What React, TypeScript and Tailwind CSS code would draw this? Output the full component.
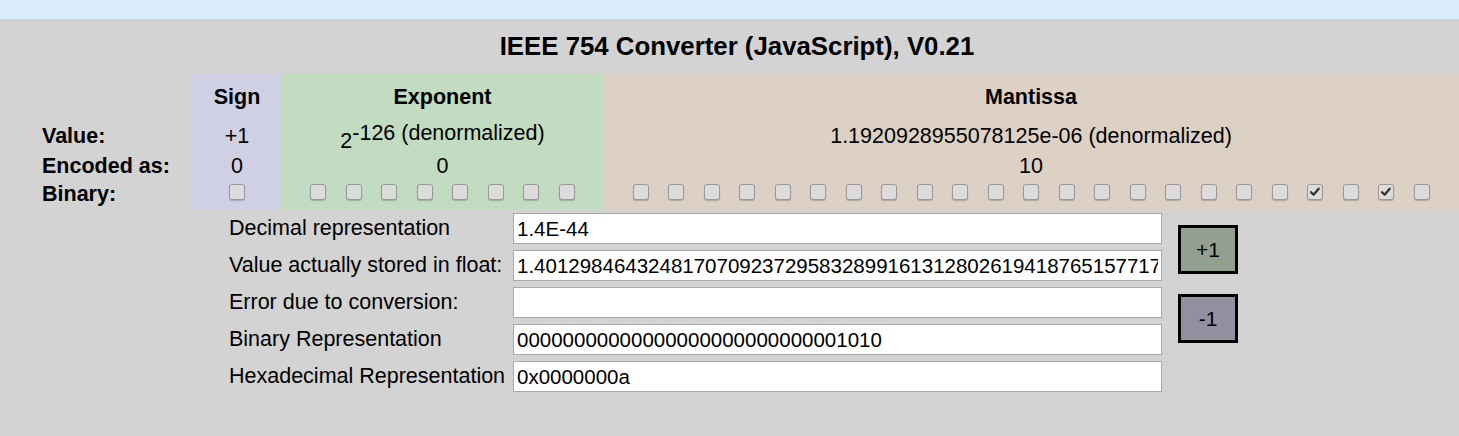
import React from "react";

/* IEEE 754 float converter panel */

const font = { fontFamily: '"Liberation Sans", Arial, sans-serif' };

const signBg = "bg-[#d0d0e4]";
const expBg = "bg-[#c1dcc1]";
const manBg = "bg-[#ddd1c6]";

const mantissaBits = Array.from({ length: 23 }, (_, i) => i === 19 || i === 21);
const exponentBits = Array.from({ length: 8 }, () => false);

function Bit({ on }: { on?: boolean }) {
  return (
    <span className="flex h-[16px] w-[16px] items-center justify-center rounded-[3px] border border-[#999999] bg-[#dcdcdc] shadow-[0_1px_1px_rgba(0,0,0,0.2)]">
      {on ? (
        <svg viewBox="0 0 16 16" className="h-[14px] w-[14px]">
          <path
            d="M3.5 8.2 L6.4 11.2 L12.2 4.2"
            fill="none"
            stroke="#333"
            strokeWidth="2.6"
            strokeLinecap="round"
            strokeLinejoin="round"
          />
        </svg>
      ) : null}
    </span>
  );
}

const fields: { label: string; value: string }[] = [
  { label: "Decimal representation", value: "1.4E-44" },
  {
    label: "Value actually stored in float:",
    value:
      "1.40129846432481707092372958328991613128026194187651577175706828388979108268586060148663818836212158203125E-44",
  },
  { label: "Error due to conversion:", value: "" },
  { label: "Binary Representation", value: "00000000000000000000000000001010" },
  { label: "Hexadecimal Representation", value: "0x0000000a" },
];

export default function App() {
  return (
    <div className="min-h-screen bg-[#d3d3d3] text-[21.5px] text-black" style={font}>
      <div className="h-[19px] bg-[#daedfd]" />

      <div className="flex h-[55px] items-center justify-center pl-[15px]">
        <h1 className="text-[25.8px] font-bold">IEEE 754 Converter (JavaScript), V0.21</h1>
      </div>

      {/* bit table */}
      <div className="grid grid-cols-[192px_90px_321px_1fr] grid-rows-[46px_32px_28px_29px]">
        {/* header */}
        <div />
        <div className={`flex items-center justify-center font-bold ${signBg}`}>Sign</div>
        <div className={`flex items-center justify-center font-bold ${expBg}`}>Exponent</div>
        <div className={`flex items-center justify-center font-bold ${manBg}`}>Mantissa</div>

        {/* value */}
        <div className="flex items-center pl-[42px] font-bold">Value:</div>
        <div className={`flex items-center justify-center ${signBg}`}>+1</div>
        <div className={`flex items-center justify-center ${expBg}`}>
          <span className="relative top-[5px]">2</span>
          <span className="relative -top-[3px]">-126 (denormalized)</span>
        </div>
        <div className={`flex items-center justify-center ${manBg}`}>
          1.1920928955078125e-06 (denormalized)
        </div>

        {/* encoded */}
        <div className="flex items-center pl-[42px] font-bold">Encoded as:</div>
        <div className={`flex items-center justify-center ${signBg}`}>0</div>
        <div className={`flex items-center justify-center ${expBg}`}>0</div>
        <div className={`flex items-center justify-center ${manBg}`}>10</div>

        {/* binary */}
        <div className="flex items-center pl-[42px] font-bold">Binary:</div>
        <div className={`flex justify-center pt-[4px] ${signBg}`}>
          <Bit />
        </div>
        <div className={`flex justify-center gap-[19.6px] pt-[4px] ${expBg}`}>
          {exponentBits.map((b, i) => (
            <Bit key={i} on={b} />
          ))}
        </div>
        <div className={`flex justify-center gap-[19.5px] pt-[4px] ${manBg}`}>
          {mantissaBits.map((b, i) => (
            <Bit key={i} on={b} />
          ))}
        </div>
      </div>

      {/* conversion fields */}
      <div className="flex pl-[229px] pt-[4px]">
        <div className="grid grid-cols-[284px_649px] gap-y-[6px]">
          {fields.map((f) => (
            <React.Fragment key={f.label}>
              <div className="flex h-[31px] items-center whitespace-nowrap">{f.label}</div>
              <input
                readOnly
                value={f.value}
                className="h-[31px] w-[649px] border border-[#a9a9a9] bg-white px-[3px] text-[20.5px] outline-none"
                style={font}
              />
            </React.Fragment>
          ))}
        </div>
        <div className="ml-[16px] flex flex-col gap-[20px] pt-[12px]">
          <button
            type="button"
            className="flex h-[49px] w-[60px] items-center justify-center border-[3px] border-black bg-[#93a08f] text-[21px]"
          >
            +1
          </button>
          <button
            type="button"
            className="flex h-[49px] w-[60px] items-center justify-center border-[3px] border-black bg-[#918fa0] text-[21px]"
          >
            -1
          </button>
        </div>
      </div>
    </div>
  );
}
